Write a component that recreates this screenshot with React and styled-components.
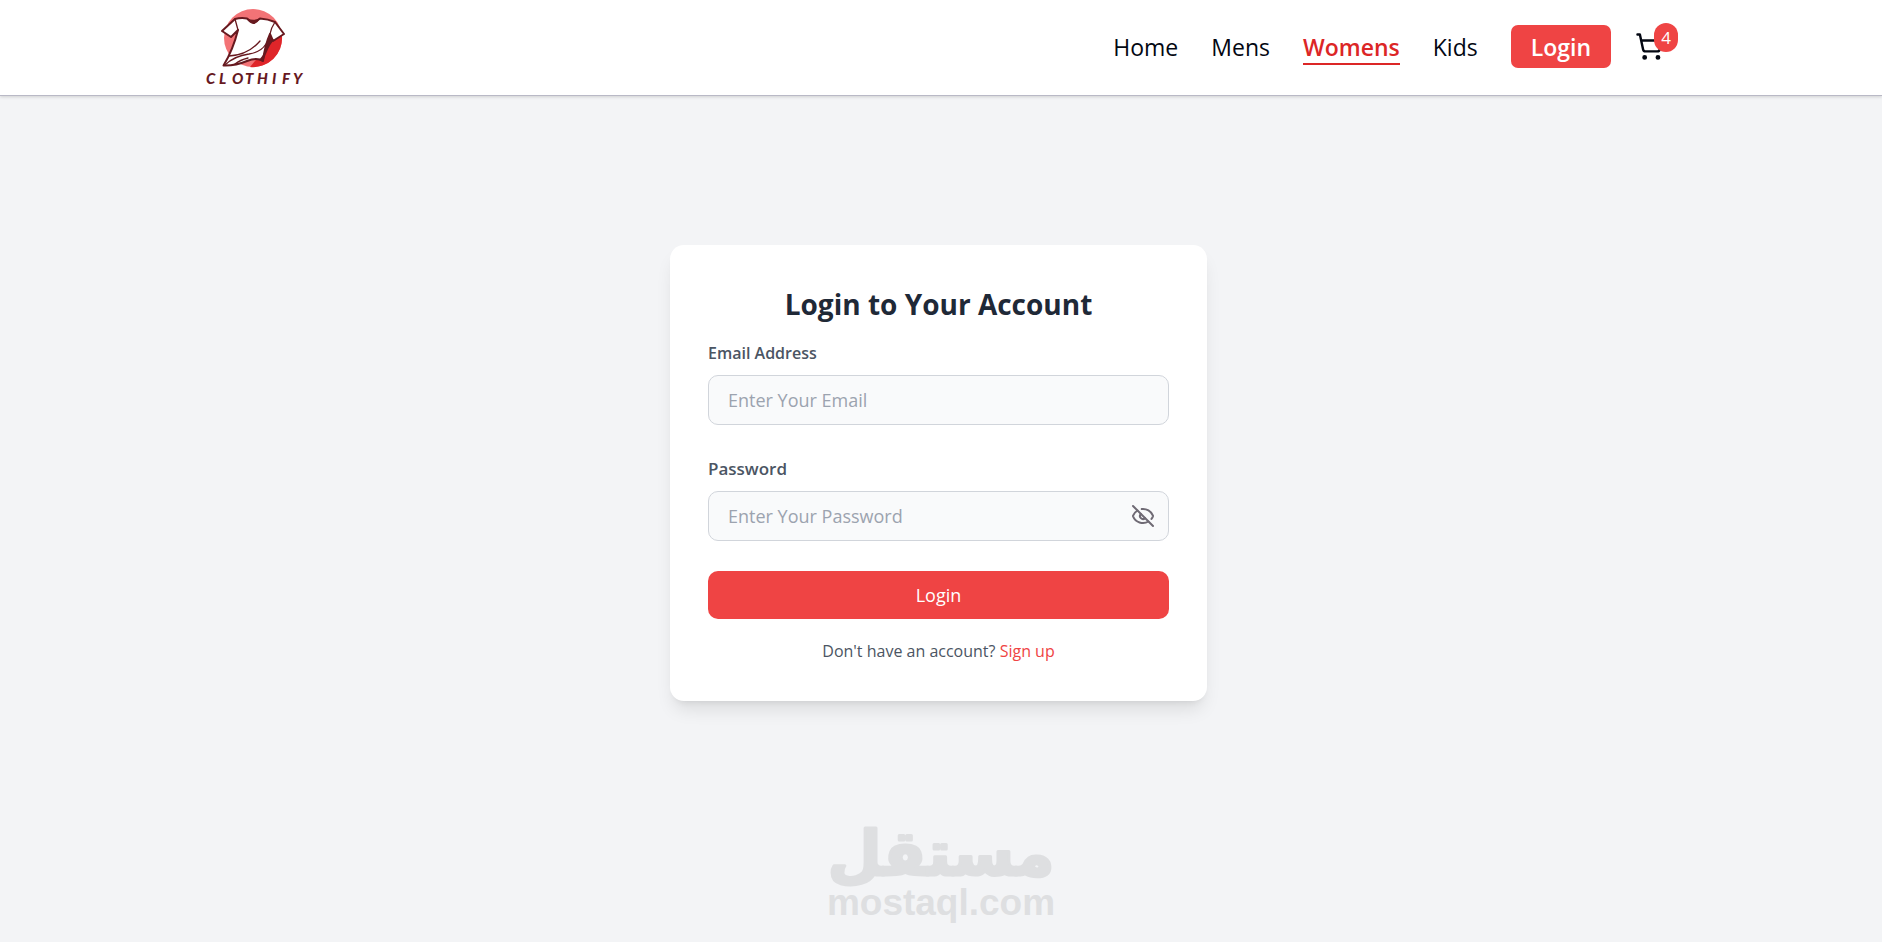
import React, { useState } from "react"
import styled, { createGlobalStyle } from "styled-components"
import { EyeOff, ShoppingCart } from "lucide-react"

const GlobalStyle = createGlobalStyle`
  * {
    box-sizing: border-box;
  }
  body {
    margin: 0;
    background-color: #f3f4f6;
    color: #030712;
    font-family: "Open Sans", "Noto Sans", sans-serif;
  }
  button,
  input {
    font-family: inherit;
  }
  a {
    color: inherit;
    text-decoration: none;
  }
`

const Page = styled.div`
  display: flex;
  flex-direction: column;
  min-height: 100vh;
`

const Header = styled.header`
  background-color: #fff;
  border-bottom: 1px solid #b9b9c6;
  box-shadow: 0 1px 3px rgba(0, 0, 0, 0.15);
`

const HeaderInner = styled.div`
  display: flex;
  align-items: center;
  justify-content: space-between;
  max-width: 1474px;
  height: 95px;
  margin: 0 auto;
`

const LogoLink = styled.a`
  display: block;
  svg {
    display: block;
  }
`

const Nav = styled.nav`
  display: flex;
  align-items: center;
  gap: 24px;
  padding-bottom: 2px;
`

const NavList = styled.ul`
  display: flex;
  align-items: center;
  gap: 33px;
  margin: 0;
  padding: 0;
  list-style: none;
`

const NavLink = styled.a`
  display: block;
  padding-top: 2px;
  border-bottom: 2px solid ${(p) => (p.$active ? "#dc2626" : "transparent")};
  color: ${(p) => (p.$active ? "#dc2626" : "inherit")};
  font-size: 23px;
  font-weight: ${(p) => (p.$active ? 600 : 400)};
  line-height: 32px;
`

const NavButton = styled.button`
  display: block;
  height: 43px;
  padding: 0 20px;
  border: 0;
  border-radius: 7px;
  background-color: #ef4444;
  color: #fff;
  cursor: pointer;
  font-size: 23px;
  font-weight: 600;
`

const CartLink = styled.a`
  position: relative;
  display: block;
  width: 43px;
  height: 29px;
  svg {
    display: block;
  }
`

const CartBadge = styled.span`
  position: absolute;
  top: -9px;
  right: 0;
  width: 24px;
  border-radius: 12px;
  background-color: #ef4444;
  color: #fff;
  font-size: 17px;
  line-height: 29px;
  text-align: center;
`

const Main = styled.main`
  display: flex;
  flex: 1;
  flex-direction: column;
  align-items: center;
  padding: 149px 5px 0 0;
`

const Card = styled.form`
  width: 100%;
  max-width: 537px;
  padding: 38px;
  border-radius: 14px;
  background-color: #fff;
  box-shadow: 0 12px 18px -4px rgba(0, 0, 0, 0.1),
    0 5px 7px -5px rgba(0, 0, 0, 0.1);
`

const Title = styled.h2`
  margin: 0 0 14px;
  color: #1f2937;
  font-size: 28px;
  font-weight: 700;
  line-height: 42px;
  text-align: center;
`

const Field = styled.div`
  margin-bottom: 30px;
`

const Label = styled.label`
  display: block;
  margin-bottom: 8px;
  color: #4b5563;
  font-size: ${(p) => (p.$small ? 16 : 17)}px;
  font-weight: 600;
  line-height: 28px;
`

const InputWrap = styled.div`
  position: relative;
`

const Input = styled.input`
  display: block;
  width: 100%;
  height: 50px;
  padding: 0 19px;
  border: 1px solid #d1d5db;
  border-radius: 10px;
  background-color: #f9fafb;
  color: #1f2937;
  font-size: 18px;
  &::placeholder {
    color: #9ca3af;
  }
`

const EyeButton = styled.button`
  position: absolute;
  top: 13px;
  right: 14px;
  padding: 0;
  border: 0;
  background: none;
  color: #6f6a74;
  cursor: pointer;
  svg {
    display: block;
  }
`

const SubmitButton = styled.button`
  display: block;
  width: 100%;
  height: 48px;
  border: 0;
  border-radius: 10px;
  background-color: #ef4444;
  color: #fff;
  cursor: pointer;
  font-size: 18px;
`

const Signup = styled.p`
  margin: 20px 0 0;
  color: #4b5563;
  font-size: 16px;
  line-height: 24px;
  text-align: center;
  a {
    color: #ef4444;
  }
`

const Footer = styled.footer`
  display: flex;
  justify-content: center;
  margin-top: auto;
  padding-bottom: 12px;
  svg {
    display: block;
  }
`

const Logo = () => (
  <svg width="110" height="95" viewBox="0 0 110 95" role="img" aria-label="Clothify">
    <circle cx="49" cy="38" r="29" fill="#f37376" />
    <path d="M78 36 A29 29 0 0 1 46 67 L60 50 L68 40 Z" fill="#df2529" />
    <path
      d="M31 19 Q37 17.5 43 18.5 Q49 25 56 18.5 Q64 19 71 22 L80 34 L69 41 L66 34 Q61 45 59 61 Q53 57 43 61 Q31 66 19.5 65.5 Q29 50 34 30 L27 37 L18 31 Z"
      fill="#fff"
      stroke="#67191f"
      strokeWidth="2"
      strokeLinejoin="round"
    />
    <path d="M66 34 L69 41 Q64 47 59 62 L55 60 Q63 51 62 44 Z" fill="#67191f" />
    <path d="M43 18.5 Q49 21 56 18.5 Q53 24 49 24 Q45 23 43 18.5 Z" fill="#67191f" />
    <path
      d="M31 19 L34 30 M71 22 Q67 28 66 34 M25 56 Q44 55 56 41 M21 65 Q30 56 45 54 Q57 52 62 44 M31 64 Q36 60 44 58"
      fill="none"
      stroke="#67191f"
      strokeWidth="1.3"
      strokeLinecap="round"
    />
    <text
      x="2 15 28 41 53 68 78 89"
      y="84"
      fill="#67191f"
      fontFamily="Lato, sans-serif"
      fontSize="15"
      fontStyle="italic"
      fontWeight="900"
    >
      CLOTHIFY
    </text>
  </svg>
)

const Watermark = () => (
  <svg
    width="240"
    height="112"
    viewBox="0 0 240 112"
    fill="#dedfe1"
    stroke="#dedfe1"
    strokeLinejoin="round"
    fontWeight="700"
    textAnchor="middle"
  >
    <text x="120" y="57" fontSize="62" strokeWidth="3" fontFamily="DejaVu Sans, sans-serif">
      مستقل
    </text>
    <text x="120" y="97" fontSize="37" strokeWidth="0" fontFamily="Liberation Sans, sans-serif">
      mostaql.com
    </text>
  </svg>
)

const links = ["Home", "Mens", "Womens", "Kids"]

export default function App() {
  const [visible, setVisible] = useState(false)
  return (
    <Page>
      <GlobalStyle />
      <Header>
        <HeaderInner>
          <LogoLink href="#home">
            <Logo />
          </LogoLink>
          <Nav>
            <NavList>
              {links.map((name) => (
                <li key={name}>
                  <NavLink href={`#${name.toLowerCase()}`} $active={name === "Womens"}>
                    {name}
                  </NavLink>
                </li>
              ))}
              <li>
                <NavButton type="button">Login</NavButton>
              </li>
            </NavList>
            <CartLink href="#cart" aria-label="Cart">
              <ShoppingCart size={29} />
              <CartBadge>4</CartBadge>
            </CartLink>
          </Nav>
        </HeaderInner>
      </Header>
      <Main>
        <Card onSubmit={(e) => e.preventDefault()}>
          <Title>Login to Your Account</Title>
          <Field>
            <Label htmlFor="email" $small>
              Email Address
            </Label>
            <Input id="email" type="email" placeholder="Enter Your Email" />
          </Field>
          <Field>
            <Label htmlFor="password">Password</Label>
            <InputWrap>
              <Input
                id="password"
                type={visible ? "text" : "password"}
                placeholder="Enter Your Password"
              />
              <EyeButton
                type="button"
                aria-label="Toggle password"
                onClick={() => setVisible(!visible)}
              >
                <EyeOff size={24} />
              </EyeButton>
            </InputWrap>
          </Field>
          <SubmitButton type="submit">Login</SubmitButton>
          <Signup>
            Don't have an account? <a href="#signup">Sign up</a>
          </Signup>
        </Card>
      </Main>
      <Footer>
        <Watermark />
      </Footer>
    </Page>
  )
}
